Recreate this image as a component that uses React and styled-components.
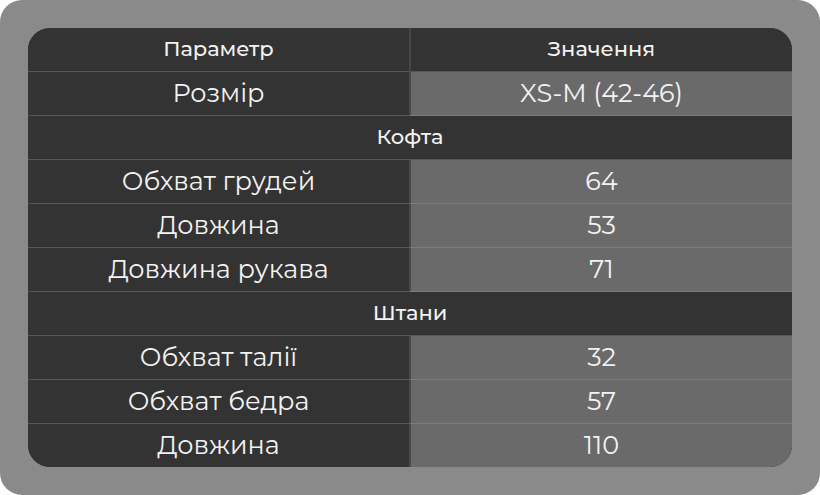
import React from 'react';
import styled, { createGlobalStyle } from 'styled-components';

const ROWS = [
  { type: 'row', label: 'Розмір', value: 'XS-M (42-46)' },
  { type: 'section', label: 'Кофта' },
  { type: 'row', label: 'Обхват грудей', value: '64' },
  { type: 'row', label: 'Довжина', value: '53' },
  { type: 'row', label: 'Довжина рукава', value: '71' },
  { type: 'section', label: 'Штани' },
  { type: 'row', label: 'Обхват талії', value: '32' },
  { type: 'row', label: 'Обхват бедра', value: '57' },
  { type: 'row', label: 'Довжина', value: '110' },
];

const GlobalStyle = createGlobalStyle`
  html, body {
    margin     : 0;
    padding    : 0;
    background : #ffffff;
  }
`;

const Frame = styled.div`
  width         : 820px;
  height        : 495px;
  box-sizing    : border-box;
  padding       : 28px;
  background    : #8a8a8a;
  border-radius : 22px;
`;

const Table = styled.div`
  display               : grid;
  grid-template-columns : 381px 383px;
  grid-auto-rows        : 44px;
  height                : 439px;
  background            : #333333;
  border-radius         : 22px;
  overflow              : hidden;
  font-family           : 'Montserrat', 'Noto Sans', sans-serif;
  color                 : #f2f2f2;
`;

const Cell = styled.div`
  display         : flex;
  align-items     : center;
  justify-content : center;
  box-sizing      : border-box;
  padding-bottom  : 3px;
  white-space     : nowrap;
  font-size       : 25.5px;
  background      : #333333;
  border-bottom   : ${p => (p.$last ? 'none' : '1px solid #565656')};
`;

const ValueCell = styled(Cell)`
  background    : #6a6a6a;
  border-left   : 2px solid #4a4a4a;
  border-bottom : ${p => (p.$last ? 'none' : '1px solid #7c7c7c')};
`;

const HeadCell = styled(Cell)`
  font-size   : 21px;
  font-weight : 500;
  border-left : ${p => (p.$divider ? '2px solid #474747' : 'none')};
`;

const Section = styled(Cell)`
  grid-column : 1 / span 2;
  font-size   : 21px;
  font-weight : 500;
`;

const App = () => (
  <>
    <GlobalStyle />
    <Frame>
      <Table>
        <HeadCell>Параметр</HeadCell>
        <HeadCell $divider>Значення</HeadCell>
        {
          ROWS.map((r, i) => {
            const last = i === ROWS.length - 1;
            if (r.type === 'section') {
              return <Section key={i}>{r.label}</Section>;
            }
            return (
              <React.Fragment key={i}>
                <Cell $last={last}>{r.label}</Cell>
                <ValueCell $last={last}>{r.value}</ValueCell>
              </React.Fragment>
            );
          })
        }
      </Table>
    </Frame>
  </>
);

export default App;
